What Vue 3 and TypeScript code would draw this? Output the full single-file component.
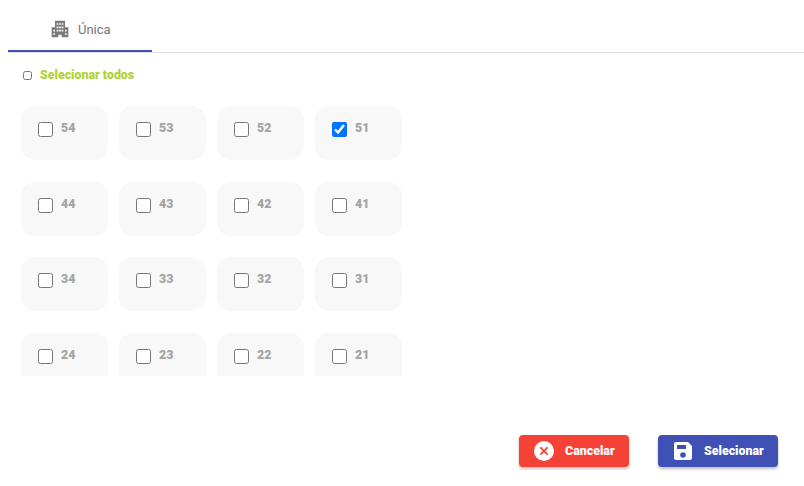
<script setup lang="ts">
const rows: number[][] = [
  [54, 53, 52, 51],
  [44, 43, 42, 41],
  [34, 33, 32, 31],
  [24, 23, 22, 21]
]

const selected = [51]
</script>

<template>
  <div class="page">
    <div class="tabs">
      <div class="tab">
        <svg class="tab-icon" viewBox="0 0 24 24" width="20" height="20">
          <path fill="#7a7a7a" fill-rule="evenodd" d="M2 22V10h4V2h12v8h4v12h-8v-3h-4v3H2zM4 13v2h2v-2H4zm0 4v2h2v-2H4zM8 5v2h2V5H8zm0 4v2h2V9H8zm0 4v2h2v-2H8zm3-8v2h2V5h-2zm0 4v2h2V9h-2zm0 4v2h2v-2h-2zm3-8v2h2V5h-2zm0 4v2h2V9h-2zm0 4v2h2v-2h-2zm4 0v2h2v-2h-2zm0 4v2h2v-2h-2z" />
        </svg>
        <span class="tab-label">Única</span>
      </div>
    </div>

    <label class="select-all">
      <input type="checkbox" class="small-check" />
      <span class="lift">Selecionar todos</span>
    </label>

    <div class="list">
      <div v-for="(row, i) in rows" :key="i" class="row">
        <div v-for="n in row" :key="n" class="card">
          <input type="checkbox" class="check" :checked="selected.includes(n)" />
          <span class="num">{{ n }}</span>
        </div>
      </div>
    </div>

    <div class="actions">
      <button class="btn cancel">
        <svg viewBox="0 0 24 24" width="24" height="24">
          <circle cx="12" cy="12" r="10" fill="#fff" />
          <path d="M8.4 8.4l7.2 7.2M15.6 8.4l-7.2 7.2" stroke="#f44336" stroke-width="1.8" fill="none" />
        </svg>
        <span class="lift">Cancelar</span>
      </button>
      <button class="btn save">
        <svg viewBox="0 0 24 24" width="24" height="24">
          <path fill="#fff" fill-rule="evenodd" d="M5 3h12l4 4v12a2 2 0 0 1-2 2H5a2 2 0 0 1-2-2V5a2 2 0 0 1 2-2zm1 3v4h9V6H6zm6 7.2a2.8 2.8 0 1 0 0 5.6 2.8 2.8 0 0 0 0-5.6z" />
        </svg>
        <span class="lift">Selecionar</span>
      </button>
    </div>
  </div>
</template>

<style>
html,
body {
  margin: 0;
  background: #fff;
}
</style>

<style scoped>
.page {
  width: 804px;
  height: 486px;
  overflow: hidden;
  font-family: Roboto, "Liberation Sans", sans-serif;
  background: #fff;
}

.tabs {
  margin-left: 8px;
  height: 52px;
  border-bottom: 1px solid #e0e0e0;
}

.tab {
  width: 144px;
  height: 52px;
  border-bottom: 2px solid #3f51b5;
  display: flex;
  align-items: center;
  gap: 8px;
  padding: 8px 0 0 42px;
  box-sizing: border-box;
}

.tab-icon {
  display: block;
}

.tab-label {
  font-size: 13px;
  color: #757575;
}

.lift {
  margin-bottom: 2px;
}

.select-all {
  display: flex;
  align-items: center;
  margin: 15px 0 0 23px;
  height: 14px;
  font-size: 12.4px;
  font-weight: 900;
  color: #b2d235;
}

.small-check {
  width: 9px;
  height: 9px;
  margin: 0 8px 0 0;
}

.list {
  margin: 24px 0 0 21px;
  height: 270px;
  overflow: hidden;
  display: flex;
  flex-direction: column;
  gap: 21.5px;
}

.row {
  display: flex;
  gap: 11px;
}

.card {
  width: 87px;
  height: 54px;
  flex: none;
  background: #f8f8f8;
  border-radius: 14px;
  display: flex;
  align-items: flex-start;
  padding: 16px 0 0 17px;
  box-sizing: border-box;
}

.check {
  width: 15px;
  height: 15px;
  margin: 0 8px 0 0;
}

.num {
  font-size: 12.4px;
  font-weight: 900;
  color: #a4a4a4;
  line-height: 11px;
}

.actions {
  display: flex;
  justify-content: flex-end;
  gap: 29px;
  margin: 59px 26px 0 0;
}

.btn {
  height: 32px;
  border: none;
  border-radius: 4px;
  color: #fff;
  font-family: inherit;
  font-size: 12.4px;
  font-weight: 900;
  display: flex;
  align-items: center;
  padding: 0;
  box-shadow: 0 2px 3px rgba(0, 0, 0, 0.25);
}

.cancel {
  width: 110px;
  background: #f44336;
  padding-left: 13px;
  gap: 9px;
}

.save {
  width: 120px;
  background: #3f51b5;
  padding-left: 13px;
  gap: 9px;
}
</style>
